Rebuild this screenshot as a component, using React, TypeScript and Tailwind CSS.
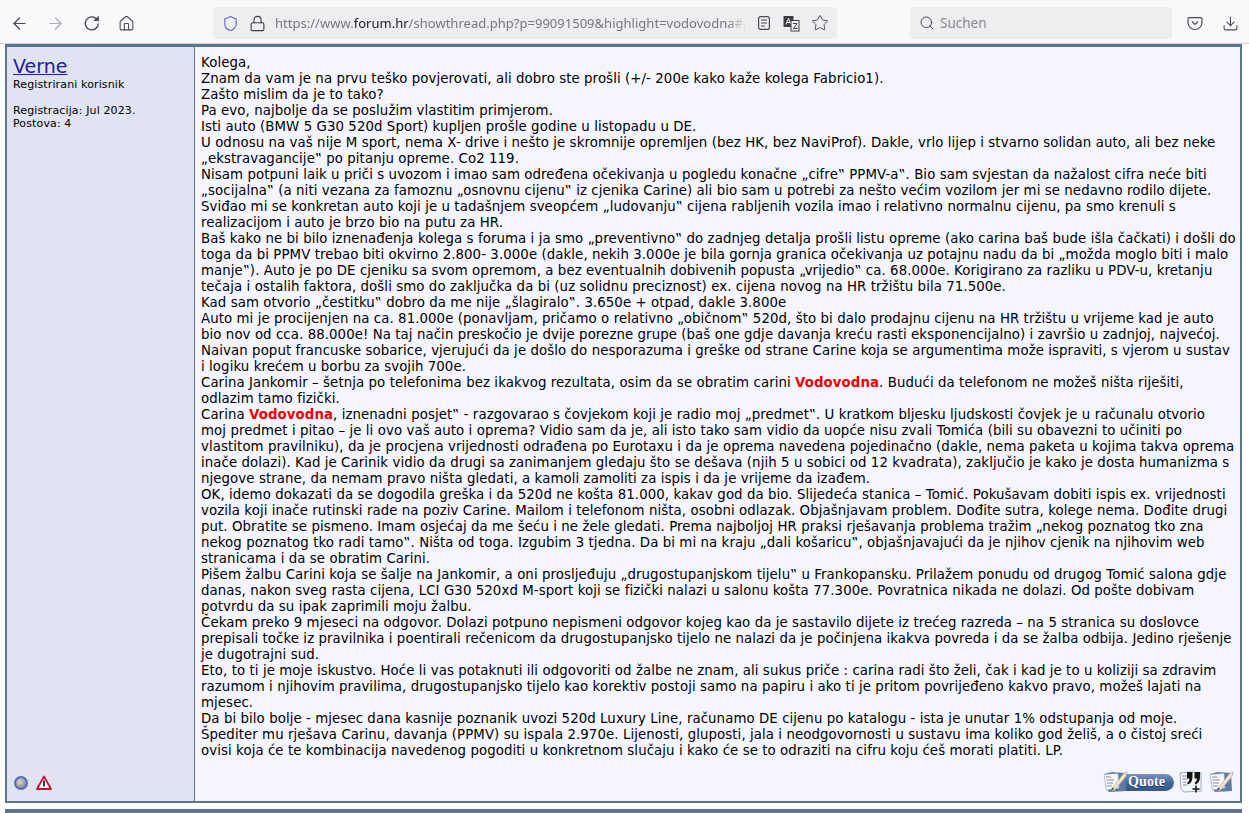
import React from "react";
import { ArrowLeft, ArrowRight, Home, Shield, Lock, Star, Search, Download } from "lucide-react";

const lines: string[] = [
  "Kolega,",
  "Znam da vam je na prvu teško povjerovati, ali dobro ste prošli (+/- 200e kako kaže kolega Fabricio1).",
  "Zašto mislim da je to tako?",
  "Pa evo, najbolje da se poslužim vlastitim primjerom.",
  "Isti auto (BMW 5 G30 520d Sport) kupljen prošle godine u listopadu u DE.",
  "U odnosu na vaš nije M sport, nema X- drive i nešto je skromnije opremljen (bez HK, bez NaviProf). Dakle, vrlo lijep i stvarno solidan auto, ali bez neke",
  "„ekstravagancije‟ po pitanju opreme. Co2 119.",
  "Nisam potpuni laik u priči s uvozom i imao sam određena očekivanja u pogledu konačne „cifre‟ PPMV-a‟. Bio sam svjestan da nažalost cifra neće biti",
  "„socijalna‟ (a niti vezana za famoznu „osnovnu cijenu‟ iz cjenika Carine) ali bio sam u potrebi za nešto većim vozilom jer mi se nedavno rodilo dijete.",
  "Sviđao mi se konkretan auto koji je u tadašnjem sveopćem „ludovanju‟ cijena rabljenih vozila imao i relativno normalnu cijenu, pa smo krenuli s",
  "realizacijom i auto je brzo bio na putu za HR.",
  "Baš kako ne bi bilo iznenađenja kolega s foruma i ja smo „preventivno‟ do zadnjeg detalja prošli listu opreme (ako carina baš bude išla čačkati) i došli do",
  "toga da bi PPMV trebao biti okvirno 2.800- 3.000e (dakle, nekih 3.000e je bila gornja granica očekivanja uz potajnu nadu da bi „možda moglo biti i malo",
  "manje‟). Auto je po DE cjeniku sa svom opremom, a bez eventualnih dobivenih popusta „vrijedio‟ ca. 68.000e. Korigirano za razliku u PDV-u, kretanju",
  "tečaja i ostalih faktora, došli smo do zaključka da bi (uz solidnu preciznost) ex. cijena novog na HR tržištu bila 71.500e.",
  "Kad sam otvorio „čestitku‟ dobro da me nije „šlagiralo‟. 3.650e + otpad, dakle 3.800e",
  "Auto mi je procijenjen na ca. 81.000e (ponavljam, pričamo o relativno „običnom‟ 520d, što bi dalo prodajnu cijenu na HR tržištu u vrijeme kad je auto",
  "bio nov od cca. 88.000e! Na taj način preskočio je dvije porezne grupe (baš one gdje davanja kreću rasti eksponencijalno) i završio u zadnjoj, najvećoj.",
  "Naivan poput francuske sobarice, vjerujući da je došlo do nesporazuma i greške od strane Carine koja se argumentima može ispraviti, s vjerom u sustav",
  "i logiku krećem u borbu za svojih 700e.",
  "Carina Jankomir – šetnja po telefonima bez ikakvog rezultata, osim da se obratim carini *Vodovodna*. Budući da telefonom ne možeš ništa riješiti,",
  "odlazim tamo fizički.",
  "Carina *Vodovodna*, iznenadni posjet‟ - razgovarao s čovjekom koji je radio moj „predmet‟. U kratkom bljesku ljudskosti čovjek je u računalu otvorio",
  "moj predmet i pitao – je li ovo vaš auto i oprema? Vidio sam da je, ali isto tako sam vidio da uopće nisu zvali Tomića (bili su obavezni to učiniti po",
  "vlastitom pravilniku), da je procjena vrijednosti odrađena po Eurotaxu i da je oprema navedena pojedinačno (dakle, nema paketa u kojima takva oprema",
  "inače dolazi). Kad je Carinik vidio da drugi sa zanimanjem gledaju što se dešava (njih 5 u sobici od 12 kvadrata), zaključio je kako je dosta humanizma s",
  "njegove strane, da nemam pravo ništa gledati, a kamoli zamoliti za ispis i da je vrijeme da izađem.",
  "OK, idemo dokazati da se dogodila greška i da 520d ne košta 81.000, kakav god da bio. Slijedeća stanica – Tomić. Pokušavam dobiti ispis ex. vrijednosti",
  "vozila koji inače rutinski rade na poziv Carine. Mailom i telefonom ništa, osobni odlazak. Objašnjavam problem. Dođite sutra, kolege nema. Dođite drugi",
  "put. Obratite se pismeno. Imam osjećaj da me šeću i ne žele gledati. Prema najboljoj HR praksi rješavanja problema tražim „nekog poznatog tko zna",
  "nekog poznatog tko radi tamo‟. Ništa od toga. Izgubim 3 tjedna. Da bi mi na kraju „dali košaricu‟, objašnjavajući da je njihov cjenik na njihovim web",
  "stranicama i da se obratim Carini.",
  "Pišem žalbu Carini koja se šalje na Jankomir, a oni prosljeđuju „drugostupanjskom tijelu‟ u Frankopansku. Prilažem ponudu od drugog Tomić salona gdje",
  "danas, nakon sveg rasta cijena, LCI G30 520xd M-sport koji se fizički nalazi u salonu košta 77.300e. Povratnica nikada ne dolazi. Od pošte dobivam",
  "potvrdu da su ipak zaprimili moju žalbu.",
  "Čekam preko 9 mjeseci na odgovor. Dolazi potpuno nepismeni odgovor kojeg kao da je sastavilo dijete iz trećeg razreda – na 5 stranica su doslovce",
  "prepisali točke iz pravilnika i poentirali rečenicom da drugostupanjsko tijelo ne nalazi da je počinjena ikakva povreda i da se žalba odbija. Jedino rješenje",
  "je dugotrajni sud.",
  "Eto, to ti je moje iskustvo. Hoće li vas potaknuti ili odgovoriti od žalbe ne znam, ali sukus priče : carina radi što želi, čak i kad je to u koliziji sa zdravim",
  "razumom i njihovim pravilima, drugostupanjsko tijelo kao korektiv postoji samo na papiru i ako ti je pritom povrijeđeno kakvo pravo, možeš lajati na",
  "mjesec.",
  "Da bi bilo bolje - mjesec dana kasnije poznanik uvozi 520d Luxury Line, računamo DE cijenu po katalogu - ista je unutar 1% odstupanja od moje.",
  "Špediter mu rješava Carinu, davanja (PPMV) su ispala 2.970e. Lijenosti, gluposti, jala i neodgovornosti u sustavu ima koliko god želiš, a o čistoj sreći",
  "ovisi koja će te kombinacija navedenog pogoditi u konkretnom slučaju i kako će se to odraziti na cifru koju ćeš morati platiti. LP.",
];

function Line({ text }: { text: string }) {
  const parts = text.split("*");
  return (
    <div className="whitespace-nowrap">
      {parts.map((p, i) =>
        i % 2 === 1 ? (
          <b key={i} className="font-bold text-[#ee0000]">{p}</b>
        ) : (
          <span key={i}>{p}</span>
        )
      )}
    </div>
  );
}

function PaperPencil() {
  return (
    <svg width="25" height="22" viewBox="0 0 25 22" className="shrink-0">
      <path d="M1 3 L9 1 L22 2 L23 20 L6 21 L3 18 Z" fill="#5f7ba6" />
      <path d="M1 3.500 L15 2.500 L16 17 L3.500 19 Z" fill="#f6f7fa" stroke="#a8b2c6" strokeWidth="0.6" />
      <path d="M3 6 H8 M3.500 9 H11 M4 12 H10 M4 15 H9" stroke="#7c8292" strokeWidth="0.9" />
      <path d="M8 19 L20 3 L24 1 L23 5.500 L11 20 Z" fill="#eee6d0" stroke="#8e8a7c" strokeWidth="0.5" />
      <path d="M8 19 L9.500 16.500 L11.500 18.500 Z" fill="#444" />
    </svg>
  );
}

function QuoteBtn() {
  return (
    <div className="relative flex h-[22px] w-[71px] items-center justify-end">
      <div className="flex h-[17px] w-[66px] items-center justify-end rounded-full bg-gradient-to-b from-[#7a94bb] via-[#48689a] to-[#38568a] pr-[9px] text-[14px] font-bold leading-none text-white [font-family:'Liberation_Serif',serif] [text-shadow:0_1px_1px_#24406e]">
        Quote
      </div>
      <div className="absolute left-0 top-0">
        <PaperPencil />
      </div>
    </div>
  );
}

function MultiQuote() {
  return (
    <svg width="24" height="22" viewBox="0 0 24 22" className="shrink-0">
      <path d="M1 2 L14 1 L22 2 L22 20 L5 21 L2 18 Z" fill="#f4f5f8" stroke="#8a99b4" strokeWidth="0.8" />
      <path d="M3 5 H8 M3.500 8 H8 M4 11 H7 M4 14 H8" stroke="#7c8292" strokeWidth="0.9" />
      <path d="M8 1 h5.500 v5 c0 4 -2 6.500 -4.500 7.500 l-1 -1.800 c1.600 -1 2.400 -2.200 2.400 -4.200 h-2.400 Z" fill="#151515" />
      <path d="M15.500 1 h5.500 v5 c0 4 -2 6.500 -4.500 7.500 l-1 -1.800 c1.600 -1 2.400 -2.200 2.400 -4.200 h-2.400 Z" fill="#151515" />
      <path d="M17 14.500 v7 M13.500 18 h7" stroke="#111" strokeWidth="1.500" />
    </svg>
  );
}

function ReloadIcon() {
  return (
    <svg width="18" height="18" viewBox="0 0 18 18" fill="none" className="shrink-0 text-[#4a4a50]">
      <path d="M13.600 5 A6.500 6.500 0 1 0 15.300 9.500" stroke="currentColor" strokeWidth="1.400" />
      <path d="M15.800 1.500 V7 H10.300 Z" fill="currentColor" />
    </svg>
  );
}

function ReaderIcon() {
  return (
    <svg width="16" height="16" viewBox="0 0 16 16" fill="none" stroke="#4a4a50" strokeWidth="1.200" className="shrink-0">
      <rect x="2.600" y="1.600" width="10.800" height="12.800" rx="2" />
      <path d="M5 5 H11 M5 8 H11 M5 11 H9" />
    </svg>
  );
}

function TranslateIcon() {
  return (
    <svg width="17" height="17" viewBox="0 0 17 17" className="shrink-0">
      <rect x="0.500" y="1" width="10" height="11" fill="#3c3c44" />
      <path d="M3 9.500 L5.500 3.500 L8 9.500 M3.800 7.500 H7.200" stroke="#fff" strokeWidth="1" fill="none" />
      <rect x="8" y="5.500" width="8" height="10.500" fill="#f6f6f8" stroke="#3c3c44" strokeWidth="1" />
      <path d="M10 8.500 H14 L10.500 13.500 H14.500" stroke="#3c3c44" strokeWidth="1" fill="none" />
    </svg>
  );
}

function PocketIcon() {
  return (
    <svg width="16" height="16" viewBox="0 0 16 16" fill="none" stroke="#4a4a50" strokeWidth="1.200" className="shrink-0">
      <path d="M2.500 2.600 H13.500 A1.500 1.500 0 0 1 15 4.100 V7.500 A7 7 0 0 1 1 7.500 V4.100 A1.500 1.500 0 0 1 2.500 2.600 Z" />
      <path d="M5 6.500 L8 9.500 L11 6.500" />
    </svg>
  );
}

function ReportIcon() {
  return (
    <svg width="16" height="16" viewBox="0 0 16 16" className="shrink-0">
      <path d="M8 1.500 L15 14 H1 Z" fill="#fff" stroke="#c8103c" strokeWidth="1.800" strokeLinejoin="round" />
      <path d="M8 5.500 V11.500" stroke="#222" strokeWidth="1.800" />
    </svg>
  );
}

export default function App() {
  return (
    <div className="h-[813px] w-[1249px] overflow-hidden bg-white [font-family:'DejaVu_Sans',Verdana,sans-serif]">
      <div className="flex h-[44px] items-center border-b border-[#cfcfd8] bg-[#f9f9fb] pt-[3px] text-[#4a4a50]">
        <div className="flex w-[213px] items-center pl-[10px]">
          <ArrowLeft size={19} strokeWidth={1.500} className="text-[#4a4a50]" />
          <ArrowRight size={19} strokeWidth={1.500} className="ml-[17px] text-[#a9a9ae]" />
          <div className="ml-[18px]"><ReloadIcon /></div>
          <Home size={17} strokeWidth={1.500} className="ml-[17px]" />
        </div>
        <div className="flex h-[32px] w-[624px] items-center rounded-[4px] bg-[#eeeef0] pl-[9px] pr-[8px]">
          <Shield size={17} strokeWidth={1.500} className="shrink-0 text-[#5b5bd6]" />
          <Lock size={17} strokeWidth={1.600} className="ml-[10px] shrink-0 text-[#3f3f45]" />
          <div className="ml-[9px] w-[473px] overflow-hidden whitespace-nowrap pt-[1px] text-[13px] tracking-[0.02px] text-[#77777d] [font-family:'Noto_Sans',sans-serif] [mask-image:linear-gradient(to_right,black_96%,transparent)]">
            https://www.<span className="text-[#1c1b22]">forum.hr</span>/showthread.php?p=99091509&amp;highlight=vodovodna#p
          </div>
          <div className="ml-[10px] flex items-center gap-[11px]">
            <ReaderIcon />
            <TranslateIcon />
            <Star size={18} strokeWidth={1.300} />
          </div>
        </div>
        <div className="ml-[73px] flex h-[32px] w-[262px] items-center rounded-[4px] bg-[#eeeef0] pl-[9px] text-[13.500px] text-[#8a8a90] [font-family:'Noto_Sans',sans-serif]">
          <Search size={16} strokeWidth={1.500} className="text-[#4a4a50]" />
          <span className="ml-[5px] pt-[1px]">Suchen</span>
        </div>
        <div className="ml-[15px] flex items-center gap-[19px]">
          <PocketIcon />
          <Download size={17} strokeWidth={1.500} />
        </div>
      </div>

      <div className="ml-[5px] flex h-[759px] w-[1237px] border-x-2 border-b-2 border-t-[3px] border-[#5c7490]">
        <div className="flex w-[188px] shrink-0 flex-col justify-between border-r border-[#5c7490] bg-[#dfe3f2] pb-[10px] pl-[6px] pt-[7px] text-[11px] leading-[13px] tracking-[0.13px] text-black">
          <div>
            <a className="block text-[19px] leading-[24px] tracking-normal text-[#22229c] underline">Verne</a>
            <div>Registrirani korisnik</div>
            <div className="mt-[13px]">Registracija: Jul 2023.</div>
            <div>Postova: 4</div>
          </div>
          <div className="flex items-center gap-[8px] pl-[1px]">
            <div className="h-[14px] w-[14px] rounded-full border-2 border-[#5a6fae] bg-[radial-gradient(circle_at_40%_40%,#d8d8dc,#6a6e80)]" />
            <ReportIcon />
          </div>
        </div>
        <div className="flex min-w-0 flex-1 flex-col justify-between bg-[#f5f5ff] pb-[8px] pl-[6px] pr-[6px] pt-[8px] text-[13.330px] leading-[16px] tracking-[0.075px] text-black">
          <div>
            {lines.map((l, i) => (
              <Line key={i} text={l} />
            ))}
          </div>
          <div className="flex items-center justify-end gap-[5px]">
            <QuoteBtn />
            <MultiQuote />
            <div className="ml-[1px]"><PaperPencil /></div>
          </div>
        </div>
      </div>
      <div className="ml-[5px] mt-[6px] h-[6px] w-[1237px] bg-[#5c7490]" />
    </div>
  );
}
